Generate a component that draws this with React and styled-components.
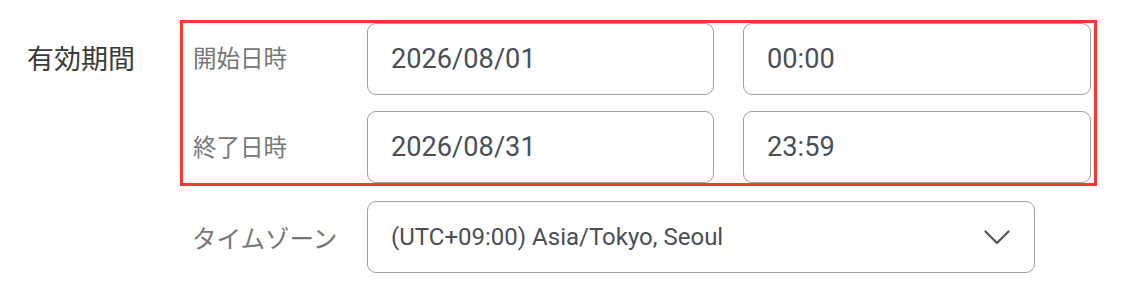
import React from "react";
import styled, { createGlobalStyle } from "styled-components";

const Global = createGlobalStyle`
  html, body { margin: 0; padding: 0; background: #fff; }
  body { font-family: Roboto, "Noto Sans CJK JP", sans-serif; }
  * { box-sizing: border-box; }
`;

const Page = styled.div`
  display: flex;
  align-items: flex-start;
  padding: 20px 0 0 27px;
  width: 1129px;
  height: 286px;
`;

const Title = styled.div`
  width: 153px;
  flex: none;
  font-size: 27px;
  line-height: 1;
  color: #3a3a3a;
  padding-top: 24px;
  font-family: "Noto Sans CJK JP", sans-serif;
`;

const Column = styled.div`
  display: flex;
  flex-direction: column;
  gap: 15px;
`;

const Highlight = styled.div`
  width: 917px;
  border: 3px solid #ff3434;
  padding: 0 3px 0 10px;
  display: flex;
  flex-direction: column;
  gap: 16px;
`;

const Row = styled.div`
  display: flex;
  align-items: center;
  padding-left: ${(p) => p.$indent || 0}px;
`;

const Label = styled.div`
  width: ${(p) => p.$w || 174}px;
  flex: none;
  font-size: ${(p) => p.$fs || 23.5}px;
  color: #777;
  font-family: "Noto Sans CJK JP", sans-serif;
  padding-bottom: ${(p) => p.$lift || 0}px;
`;

const Field = styled.div`
  width: ${(p) => p.$w}px;
  height: ${(p) => p.$h || 72}px;
  flex: none;
  border: 1.5px solid #a0a0a0;
  border-radius: 9px;
  display: flex;
  align-items: center;
  justify-content: space-between;
  padding: 0 24px 0 23px;
  font-size: ${(p) => p.$fs || 27.2}px;
  color: #4a4f57;
  margin-left: ${(p) => p.$ml || 0}px;
`;

const Chevron = () => (
  <svg width="26" height="15" viewBox="0 0 26 15" fill="none">
    <path d="M1.5 1.5 L13 13 L24.5 1.5" stroke="#555" strokeWidth="2.2" strokeLinecap="round" strokeLinejoin="round" />
  </svg>
);

export default function App() {
  return (
    <>
      <Global />
      <Page>
        <Title>有効期間</Title>
        <Column>
          <Highlight>
            <Row>
              <Label $lift={4}>開始日時</Label>
              <Field $w={347}>2026/08/01</Field>
              <Field $w={348} $ml={29}>00:00</Field>
            </Row>
            <Row>
              <Label $lift={2}>終了日時</Label>
              <Field $w={347}>2026/08/31</Field>
              <Field $w={348} $ml={29}>23:59</Field>
            </Row>
          </Highlight>
          <Row $indent={12}>
            <Label $w={175} $fs={24.5}>タイムゾーン</Label>
            <Field $w={668} $h={72} $fs={24}>
              <span>(UTC+09:00) Asia/Tokyo, Seoul</span>
              <Chevron />
            </Field>
          </Row>
        </Column>
      </Page>
    </>
  );
}
